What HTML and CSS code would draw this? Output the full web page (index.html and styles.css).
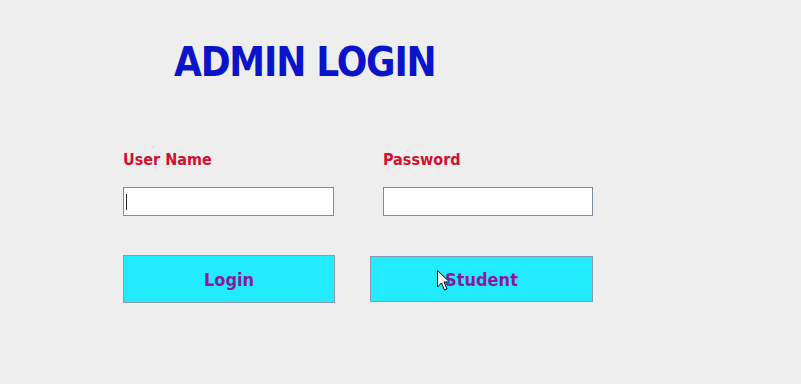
FILE: index.html
```html
<!DOCTYPE html>
<html>
<head>
<meta charset="utf-8">
<link rel="stylesheet" href="styles.css">
</head>
<body>
<div class="page">
  <h1 class="title">ADMIN LOGIN</h1>
  <div class="fields">
    <div class="field field-user">
      <label class="label">User Name</label>
      <div class="input input-user"><span class="caret"></span></div>
    </div>
    <div class="field field-pass">
      <label class="label">Password</label>
      <div class="input input-pass"></div>
    </div>
  </div>
  <div class="buttons">
    <div class="btn btn-login">Login</div>
    <div class="btn btn-student">
      <span class="btn-text">Student</span>
      <svg class="cursor" width="13" height="21" viewBox="0 0 13 21"><path d="M0.5 0.5 L0.5 17 L4.5 13 L7.5 20 L10 19 L7 12 L12.5 12 Z" fill="#fff" stroke="#000" stroke-width="1"/></svg>
    </div>
  </div>
</div>
</body>
</html>
```
FILE: styles.css
```css
html, body {
  margin: 0;
  padding: 0;
  background: #eeeeee;
  width: 801px;
  height: 384px;
  overflow: hidden;
}
.page {
  padding: 38px 0 0 123px;
  font-family: "DejaVu Sans Condensed", "DejaVu Sans", sans-serif;
  font-weight: bold;
}
.title {
  margin: 0 0 0 51px;
  font-size: 40px;
  line-height: 48px;
  color: #0a14c8;
  letter-spacing: -1.2px;
  font-weight: bold;
}
.fields {
  display: flex;
  gap: 49px;
  margin-top: 64px;
}
.field {
  display: flex;
  flex-direction: column;
}
.label {
  font-size: 16px;
  line-height: 20px;
  color: #d2102e;
  height: 20px;
}
.input {
  margin-top: 17px;
  height: 27px;
  background: #fff;
  border: 1px solid #7d8c9b;
  position: relative;
}
.input-user { width: 209px; }
.input-pass { width: 208px; }
.caret {
  position: absolute;
  left: 2px;
  top: 6px;
  width: 1px;
  height: 16px;
  background: #222;
}
.buttons {
  display: flex;
  align-items: center;
  gap: 35px;
  margin-top: 39px;
}
.btn {
  background: #22ebff;
  border: 1px solid #8f9aa8;
  color: #8a1aa0;
  font-size: 18px;
  display: flex;
  align-items: center;
  justify-content: center;
  box-sizing: border-box;
  position: relative;
}
.btn-login { width: 212px; height: 48px; }
.btn-student { width: 223px; height: 46px; border-color: #8a98b0; }
.cursor {
  position: absolute;
  left: 66px;
  top: 13px;
}
```
